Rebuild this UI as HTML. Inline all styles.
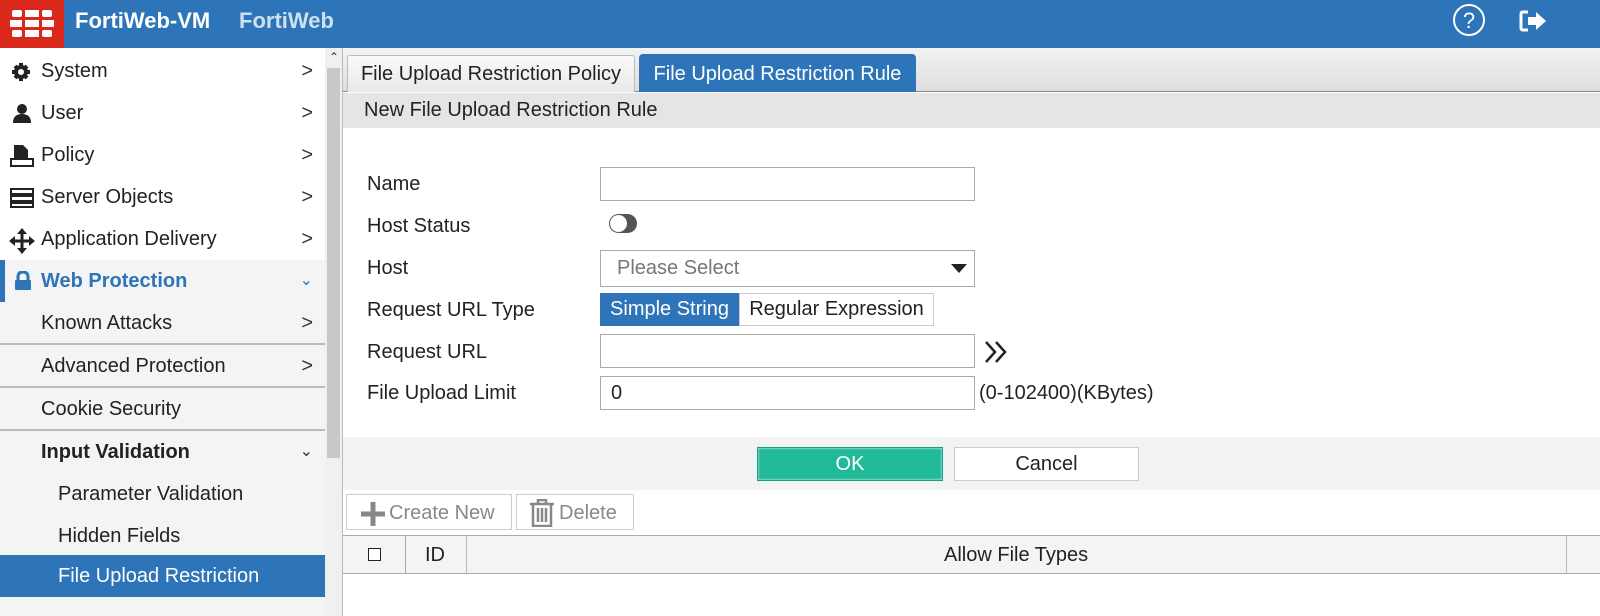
<!DOCTYPE html><html><head><style>
*{box-sizing:border-box;margin:0;padding:0}
body{width:1600px;height:616px;overflow:hidden;font-family:"Liberation Sans",sans-serif;font-size:20px;color:#222;background:#fff;position:relative}
.a{position:absolute}
.hdr{left:0;top:0;width:1600px;height:48px;background:#2d75b8}
.logo{left:0;top:0;width:64px;height:48px;background:#da291c}
.side{left:0;top:48px;width:325px;height:568px;background:#fff}
.row{position:absolute;left:0;width:325px;height:42px;line-height:42px}
.row .t{position:absolute;left:41px}
.chev{position:absolute;right:12px;top:0;font-size:20px;color:#333}
.sep{border-bottom:2px solid #bbb}
.inp{position:absolute;background:#fff;border:1px solid #aaa}
.lbl{position:absolute;left:367px}
</style></head><body>
<div class="a hdr"></div>
<div class="a logo">
<svg width="64" height="48"><g fill="#fff"><rect x="12" y="10" width="10" height="7" rx="2"/><rect x="25" y="10" width="14" height="7"/><rect x="42" y="10" width="10" height="7" rx="2"/><rect x="10" y="20" width="12" height="7"/><rect x="25" y="20" width="14" height="7"/><rect x="42" y="20" width="12" height="7"/><rect x="12" y="30" width="10" height="7" rx="2"/><rect x="25" y="30" width="14" height="7"/><rect x="42" y="30" width="10" height="7" rx="2"/></g></svg></div>
<div class="a" style="left:75px;top:8px;color:#fff;font-size:22px;font-weight:bold">FortiWeb-VM</div>
<div class="a" style="left:239px;top:8px;color:#cfe0f0;font-size:22px;font-weight:bold">FortiWeb</div>
<svg class="a" style="left:1452px;top:4px" width="36" height="36"><circle cx="17" cy="16" r="15" fill="none" stroke="#fff" stroke-width="2"/><text x="17" y="24" font-size="22" fill="#fff" text-anchor="middle" font-family="Liberation Sans">?</text></svg>
<svg class="a" style="left:1518px;top:8px" width="34" height="28"><path d="M10 4H5Q3 4 3 6V20Q3 22 5 22H10" fill="none" stroke="#fff" stroke-width="3"/><path d="M10 9H18V4L28 13L18 22V17H10Z" fill="#fff"/></svg>

<div class="a side">
<div class="row" style="top:2px"><svg class="a" style="left:10px;top:12px" width="22" height="20"><circle cx="11" cy="10" r="7" fill="#222"/><g stroke="#222" stroke-width="4"><line x1="11" y1="1" x2="11" y2="19"/><line x1="2" y1="10" x2="20" y2="10"/><line x1="5" y1="4" x2="17" y2="16"/><line x1="17" y1="4" x2="5" y2="16"/></g><circle cx="11" cy="10" r="3" fill="#fff"/></svg><span class="t">System</span><span class="chev">&gt;</span></div>
<div class="row" style="top:44px"><svg class="a" style="left:12px;top:11px" width="20" height="22"><circle cx="10" cy="6" r="5" fill="#222"/><path d="M1 20Q1 11 10 11Q19 11 19 20Z" fill="#222"/></svg><span class="t">User</span><span class="chev">&gt;</span></div>
<div class="row" style="top:86px"><svg class="a" style="left:10px;top:10px" width="24" height="24"><path d="M4 1H13L18 6V14H4Z" fill="#222"/><rect x="1" y="15" width="22" height="7" fill="none" stroke="#222" stroke-width="2"/></svg><span class="t">Policy</span><span class="chev">&gt;</span></div>
<div class="row" style="top:128px"><svg class="a" style="left:10px;top:12px" width="24" height="20"><g fill="none" stroke="#222" stroke-width="2"><rect x="1" y="1" width="22" height="5"/><rect x="1" y="8" width="22" height="5"/><rect x="1" y="15" width="22" height="4"/></g></svg><span class="t">Server Objects</span><span class="chev">&gt;</span></div>
<div class="row" style="top:170px"><svg class="a" style="left:9px;top:10px" width="26" height="26"><g fill="#222"><rect x="11.5" y="4" width="3" height="18"/><rect x="4" y="11.5" width="18" height="3"/><path d="M13 0L18 6H8Z"/><path d="M13 26L18 20H8Z"/><path d="M0 13L6 8V18Z"/><path d="M26 13L20 8V18Z"/></g></svg><span class="t">Application Delivery</span><span class="chev">&gt;</span></div>
<div class="row" style="top:212px;background:#f4f4f4"><div class="a" style="left:0;top:0;width:5px;height:42px;background:#2d75b8"></div><svg class="a" style="left:14px;top:11px" width="18" height="20"><path d="M4 9V6Q4 1 9 1Q14 1 14 6V9" fill="none" stroke="#2d75b8" stroke-width="3"/><rect x="1" y="9" width="16" height="10" rx="1" fill="#2d75b8"/></svg><span class="t" style="color:#2d75b8;font-weight:bold">Web Protection</span><span class="chev" style="color:#2d75b8;font-size:16px">&#8964;</span></div>
<div class="row sep" style="top:254px;background:#f4f4f4;height:43px"><span class="t">Known Attacks</span><span class="chev">&gt;</span></div>
<div class="row sep" style="top:297px;background:#f4f4f4;height:43px"><span class="t">Advanced Protection</span><span class="chev">&gt;</span></div>
<div class="row sep" style="top:340px;background:#f4f4f4;height:43px"><span class="t">Cookie Security</span></div>
<div class="row" style="top:383px;background:#f4f4f4"><span class="t" style="font-weight:bold">Input Validation</span><span class="chev" style="font-size:16px">&#8964;</span></div>
<div class="row" style="top:425px;background:#f4f4f4"><span class="t" style="left:58px">Parameter Validation</span></div>
<div class="row" style="top:467px;background:#f4f4f4"><span class="t" style="left:58px">Hidden Fields</span></div>
<div class="row" style="top:507px;background:#2d75b8;color:#fff"><span class="t" style="left:58px">File Upload Restriction</span></div>
<div class="row" style="top:549px;background:#f4f4f4;height:19px"></div>
</div>
<div class="a" style="left:325px;top:48px;width:17px;height:568px;background:#f0f0f0"></div>
<div class="a" style="left:327px;top:68px;width:13px;height:390px;background:#c8c8c8"></div>
<div class="a" style="left:329px;top:50px;font-size:12px;color:#333">&#8963;</div>
<div class="a" style="left:342px;top:48px;width:1px;height:568px;background:#bbb"></div>

<div class="a" style="left:343px;top:48px;width:1257px;height:44px;background:linear-gradient(#f3f3f3,#dedede);border-bottom:1px solid #888"></div>
<div class="a" style="left:347px;top:55px;width:288px;height:37px;background:linear-gradient(#fafafa,#e8e8e8);border:1px solid #bbb;border-bottom:none;border-radius:3px 3px 0 0;line-height:37px;text-align:center">File Upload Restriction Policy</div>
<div class="a" style="left:639px;top:54px;width:277px;height:38px;background:#2d75b8;color:#fff;border-radius:4px 4px 0 0;line-height:40px;text-align:center">File Upload Restriction Rule</div>
<div class="a" style="left:343px;top:93px;width:1257px;height:35px;background:#e5e5e5;line-height:35px;padding-left:21px">New File Upload Restriction Rule</div>

<div class="lbl" style="top:173px">Name</div>
<div class="inp" style="left:600px;top:167px;width:375px;height:34px"></div>
<div class="lbl" style="top:215px">Host Status</div>
<div class="a" style="left:609px;top:214px;width:28px;height:19px;border-radius:10px;background:#555"></div>
<div class="a" style="left:610px;top:215px;width:17px;height:17px;border-radius:50%;background:#fff"></div>
<div class="lbl" style="top:257px">Host</div>
<div class="inp" style="left:600px;top:250px;width:375px;height:37px;color:#777;line-height:35px;padding-left:16px">Please Select</div>
<svg class="a" style="left:951px;top:264px" width="16" height="10"><path d="M0 0H16L8 9Z" fill="#222"/></svg>
<div class="lbl" style="top:299px">Request URL Type</div>
<div class="a" style="left:600px;top:293px;width:139px;height:33px;background:#2d75b8;color:#fff;line-height:33px;text-align:center">Simple String</div>
<div class="inp" style="left:739px;top:293px;width:195px;height:33px;line-height:31px;text-align:center;border-color:#ccc">Regular Expression</div>
<div class="lbl" style="top:341px">Request URL</div>
<div class="inp" style="left:600px;top:334px;width:375px;height:34px"></div>
<svg class="a" style="left:984px;top:340px" width="26" height="24"><path d="M2 2L11 12L2 22M12 2L21 12L12 22" fill="none" stroke="#222" stroke-width="2.5"/></svg>
<div class="lbl" style="top:382px">File Upload Limit</div>
<div class="inp" style="left:600px;top:376px;width:375px;height:34px;line-height:32px;padding-left:10px">0</div>
<div class="a" style="left:979px;top:382px">(0-102400)(KBytes)</div>

<div class="a" style="left:343px;top:437px;width:1257px;height:53px;background:#f3f3f3"></div>
<div class="a" style="left:757px;top:447px;width:186px;height:34px;background:#22b999;border:1px solid #1a9c80;box-shadow:inset 0 0 2px #fff;color:#fff;line-height:32px;text-align:center">OK</div>
<div class="a" style="left:954px;top:447px;width:185px;height:34px;background:#fff;border:1px solid #ccc;line-height:32px;text-align:center">Cancel</div>

<div class="a" style="left:346px;top:494px;width:166px;height:36px;border:1px solid #ccc;color:#888;line-height:36px;padding-left:42px">Create New</div>
<svg class="a" style="left:360px;top:502px" width="26" height="24"><path d="M13 0V24M1 12H25" stroke="#888" stroke-width="5"/></svg>
<div class="a" style="left:516px;top:494px;width:118px;height:36px;border:1px solid #ccc;color:#888;line-height:36px;padding-left:42px">Delete</div>
<svg class="a" style="left:529px;top:499px" width="26" height="28"><g fill="none" stroke="#888" stroke-width="2.5"><path d="M1 5H25M9 5V1H17V5M4 5V27H22V5M9 9V23M13 9V23M17 9V23"/></g></svg>

<div class="a" style="left:343px;top:535px;width:1257px;height:39px;background:#f4f4f4;border-top:1px solid #aaa;border-bottom:1px solid #aaa"></div>
<div class="a" style="left:405px;top:536px;width:1px;height:37px;background:#aaa"></div>
<div class="a" style="left:466px;top:536px;width:1px;height:37px;background:#bbb"></div>
<div class="a" style="left:368px;top:548px;width:13px;height:13px;border:1px solid #222;background:#fff"></div>
<div class="a" style="left:425px;top:544px">ID</div>
<div class="a" style="left:944px;top:544px">Allow File Types</div>
<div class="a" style="left:1566px;top:536px;width:1px;height:37px;background:#bbb"></div>
</body></html>
